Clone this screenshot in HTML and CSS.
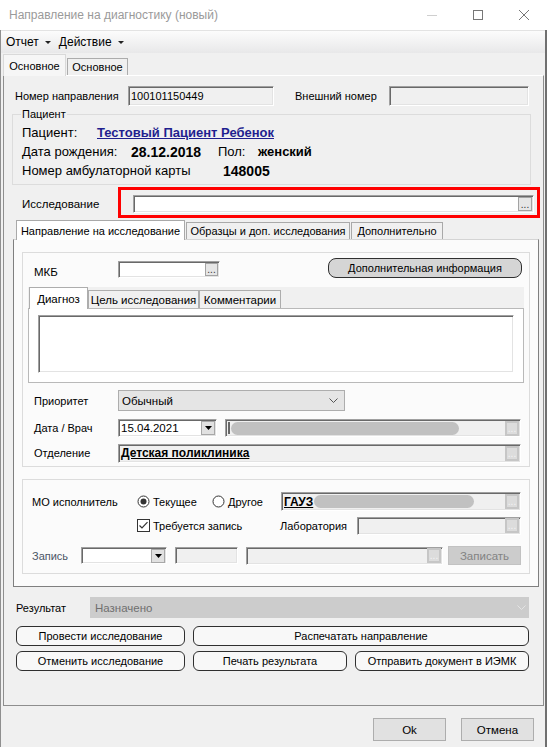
FILE: index.html
```html
<!DOCTYPE html>
<html lang="ru">
<head>
<meta charset="utf-8">
<title>Направление на диагностику (новый)</title>
<link rel="stylesheet" href="styles.css">
</head>
<body>
<div class="titlebar">
  <span class="title">Направление на диагностику (новый)</span>
  <div class="winctl">
    <span class="wbtn"><svg width="10" height="10" viewBox="0 0 10 10"><line x1="0" y1="5.5" x2="10" y2="5.5" stroke="#cfcfcf"/></svg></span>
    <span class="wbtn"><svg width="10" height="10" viewBox="0 0 10 10"><rect x="0.5" y="0.5" width="9" height="9" fill="none" stroke="#777"/></svg></span>
    <span class="wbtn"><svg width="10" height="10" viewBox="0 0 10 10"><path d="M0 0L10 10M10 0L0 10" stroke="#777" stroke-width="1"/></svg></span>
  </div>
</div>
<div class="frame">
  <div class="menubar">
    <span class="menu">Отчет<i class="menu-arrow"></i></span>
    <span class="menu">Действие<i class="menu-arrow"></i></span>
  </div>
  <div class="mtabs">
    <span class="mtab mtab-active">Основное</span>
    <span class="mtab mtab-second">Основное</span>
  </div>
  <div class="mpage">
    <div class="num-row">
      <span class="num-label">Номер направления</span>
      <span class="tb ro num-field">100101150449</span>
      <span class="ext-label">Внешний номер</span>
      <span class="tb ro ext-field"></span>
    </div>

    <fieldset class="patient">
      <legend>Пациент</legend>
      <div class="prow"><span class="pl pl-name">Пациент:</span><span class="pname">Тестовый Пациент Ребенок</span></div>
      <div class="prow"><span class="pl pl-dob">Дата рождения:</span><b class="pv pv-num pv-dob">28.12.2018</b><span class="pl pl-sex">Пол:</span><b class="pv">женский</b></div>
      <div class="prow"><span class="pl pl-card">Номер амбулаторной карты</span><b class="pv pv-num">148005</b></div>
    </fieldset>

    <div class="issl-row">
      <span class="issl-label">Исследование</span>
      <div class="highlight">
        <div class="tb issl-field"><span class="dots">...</span></div>
      </div>
    </div>

    <div class="itc">
      <div class="itabs">
        <span class="itab itab-active it1">Направление на исследование</span>
        <span class="itab it2">Образцы и доп. исследования</span>
        <span class="itab it3">Дополнительно</span>
      </div>
      <div class="ipage">
        <div class="box box1">
          <div class="mkb-row">
            <span class="lbl2 mkb-label">МКБ</span>
            <span class="tb mkb-field"><span class="dots dots-sm">...</span></span>
            <button class="rbtn rbtn-gray info-btn">Дополнительная информация</button>
          </div>
          <div class="dtc">
            <div class="dtabs">
              <span class="dtab dtab-active dt1">Диагноз</span>
              <span class="dtab dt2">Цель исследования</span>
              <span class="dtab dt3">Комментарии</span>
            </div>
            <div class="dpage"><div class="tb diag-field"></div></div>
          </div>
          <div class="frow prio-row">
            <span class="lbl2">Приоритет</span>
            <span class="combo prio-combo">Обычный<svg class="chev" width="9" height="5" viewBox="0 0 9 5"><path d="M0.5 0.5L4.5 4.5L8.5 0.5" fill="none" stroke="#555"/></svg></span>
          </div>
          <div class="frow date-row">
            <span class="lbl2">Дата / Врач</span>
            <span class="tb date-field">15.04.2021<span class="ddbtn"><svg width="7" height="4" viewBox="0 0 7 4"><path d="M0 0H7L3.5 4Z" fill="#000"/></svg></span></span>
            <span class="tb ro doc-field"><i class="mark"></i><i class="blur doc-blur"></i><span class="dots dots-off">...</span></span>
          </div>
          <div class="frow dept-row">
            <span class="lbl2">Отделение</span>
            <span class="tb ro dept-field"><b class="ulink">Детская поликлиника</b><span class="dots dots-off">...</span></span>
          </div>
        </div>

        <div class="box box2">
          <div class="frow mo-row">
            <span class="mo-label">МО исполнитель</span>
            <span class="ritem ri-cur"><svg width="13" height="13" viewBox="0 0 13 13"><circle cx="6.5" cy="6.5" r="5.5" fill="#fff" stroke="#333"/><circle cx="6.5" cy="6.5" r="3" fill="#333"/></svg><span class="rtext">Текущее</span></span>
            <span class="ritem ri-other"><svg width="13" height="13" viewBox="0 0 13 13"><circle cx="6.5" cy="6.5" r="5.5" fill="#fff" stroke="#333"/></svg><span class="rtext">Другое</span></span>
            <span class="tb ro mo-field"><b class="ulink">ГАУЗ</b><i class="blur mo-blur"></i><span class="dots dots-off">...</span></span>
          </div>
          <div class="frow rec-row">
            <span class="ritem chk-item"><svg width="13" height="13" viewBox="0 0 13 13"><rect x="0.5" y="0.5" width="12" height="12" fill="#fff" stroke="#333"/><path d="M2.5 6.5L5 9L10.5 3.2" fill="none" stroke="#333" stroke-width="1.2"/></svg><span class="rtext">Требуется запись</span></span>
            <span class="lab-label">Лаборатория</span>
            <span class="tb ro lab-field"><span class="dots dots-off">...</span></span>
          </div>
          <div class="frow zap-row">
            <span class="zap-label">Запись</span>
            <span class="tb zap-combo"><span class="ddbtn"><svg width="7" height="4" viewBox="0 0 7 4"><path d="M0 0H7L3.5 4Z" fill="#000"/></svg></span></span>
            <span class="tb ro zap-f2"></span>
            <span class="tb ro zap-f3"><span class="dots dots-off">...</span></span>
            <span class="zap-btn">Записать</span>
          </div>
        </div>
      </div>
    </div>

    <div class="res-row">
      <span class="res-label">Результат</span>
      <span class="res-combo">Назначено<svg class="chev" width="9" height="5" viewBox="0 0 9 5"><path d="M0.5 0.5L4.5 4.5L8.5 0.5" fill="none" stroke="#e4e4e4"/></svg></span>
    </div>
    <div class="btn-row">
      <button class="rbtn b-w169">Провести исследование</button>
      <button class="rbtn b-gap b-w336">Распечатать направление</button>
    </div>
    <div class="btn-row btn-row2">
      <button class="rbtn b-w169">Отменить исследование</button>
      <button class="rbtn b-gap b-w154">Печать результата</button>
      <button class="rbtn b-gap b-w174">Отправить документ в ИЭМК</button>
    </div>
  </div>
  <div class="bottombar">
    <button class="wbutton ok-btn">Ok</button>
    <button class="wbutton">Отмена</button>
  </div>
</div>
</body>
</html>
```
FILE: styles.css
```css
* { box-sizing: border-box; }
html, body { margin: 0; padding: 0; }
body {
  width: 547px; height: 747px; overflow: hidden;
  background: #f0f0f0;
  font-family: "Liberation Sans", Arial, sans-serif;
  font-size: 11px; color: #000;
}
button { font: inherit; color: inherit; margin: 0; padding: 0; }

/* title bar */
.titlebar { height: 30px; background: #fff; display: flex; align-items: center; justify-content: space-between; }
.title { padding-left: 9px; font-size: 12px; color: #9a9a9a; }
.winctl { display: flex; }
.wbtn { width: 46px; height: 30px; display: flex; align-items: center; justify-content: center; }

.frame { height: 717px; border-left: 1px solid #8f8f8f; border-right: 2px solid #707070; }

/* menu */
.menubar {
  height: 23px; border-top: 1px solid #e3e3e3;
  background: linear-gradient(#fcfcfc, #e8e8e9);
  display: flex; align-items: center; padding-left: 5px; font-size: 12px;
}
.menu { display: flex; align-items: center; margin-right: 8px; }
.menu-arrow {
  margin-left: 6px; width: 0; height: 0;
  border-left: 3px solid transparent; border-right: 3px solid transparent; border-top: 3px solid #222;
}

/* main tabs */
.mtabs { height: 22px; display: flex; align-items: flex-end; padding-left: 2px; }
.mtab {
  height: 17px; border: 1px solid #acacac; border-bottom: 0; background: #f0f0f0;
  display: flex; align-items: center; justify-content: center;
}
.mtab-active { width: 63px; height: 22px; margin-bottom: -1px; background: #f6f6f6; border-color: #d9d9d9; position: relative; z-index: 1; }
.mtab-second { width: 61px; margin-left: 1px; }

.mpage { margin-left: 2px; width: 541px; height: 631px; border: 1px solid #8e8e8e; border-top-color: #fff; }

/* text boxes */
.tb {
  display: flex; align-items: center; height: 20px; padding: 0 1px 0 2px;
  background: #fff; border: 1px solid; border-color: #a0a0a0 #fff #fff #a0a0a0;
  box-shadow: inset 1px 1px 0 #696969, inset -1px -1px 0 #e3e3e3;
  white-space: nowrap; overflow: hidden;
}
.tb.ro { background: #f0f0f0; }

.dots {
  margin-left: auto; width: 14px; height: 14px; flex: none;
  border: 1px solid #a3a3a3; background: #e6e6e6;
  display: flex; align-items: flex-end; justify-content: center;
  font-size: 10px; line-height: 8px; color: #333; padding-bottom: 1px;
}
.dots-sm { width: 13px; height: 13px; }
.dots-off { border: 2px solid #c6c6c6; background: #dcdcdc; color: #f4f4f4; width: 14px; height: 15px; }

/* row 1 */
.num-row { display: flex; align-items: center; height: 20px; margin: 10px 0 0 11px; }
.num-label { width: 113px; }
.num-field { width: 146px; }
.ext-label { width: 94px; margin-left: 21px; }
.ext-field { width: 140px; }

/* patient group */
.patient { margin: 1px 0 0 8px; width: 519px; padding: 2px 0 4px 9px; border: 1px solid #dcdcdc; min-width: 0; }
.patient legend { padding: 0 1px; margin-left: -1px; line-height: 14px; }
.prow { display: flex; align-items: center; height: 19px; font-size: 13px; white-space: nowrap; }
.pl-name { width: 75px; }
.pname { font-weight: bold; color: #1f1f8f; text-decoration: underline; }
.pl-dob { width: 109px; }
.pv-num { font-size: 14px; }
.pv-dob { width: 87px; }
.pl-sex { width: 40px; }
.pl-card { width: 201px; }

/* Исследование */
.issl-row { display: flex; align-items: center; margin: 2px 0 0 18px; }
.issl-label { width: 96px; padding-top: 3px; font-size: 11.5px; }
.highlight { width: 422px; height: 31px; border: 3px solid #f00; padding: 5px 4px 2px 12px; }
.issl-field { width: 401px; height: 18px; }

/* inner tab control */
.itc { margin: 2px 0 0 9px; width: 526px; }
.itabs { height: 19px; display: flex; align-items: flex-end; padding-left: 3px; }
.itab {
  height: 17px; border: 1px solid #a9a9a9; border-bottom: 0; background: #f0f0f0;
  display: flex; align-items: center; justify-content: center; white-space: nowrap;
}
.itab-active { height: 20px; margin-bottom: -1px; background: #fff; position: relative; z-index: 1; }
.it1 { width: 169px; }
.it2 { width: 164px; margin-left: 1px; }
.it3 { width: 92px; margin-left: 1px; }
.ipage {
  height: 348px; border: 1px solid #7f7f7f; border-top-color: #d4d4d4;
  background: #fbfbfb; padding: 12px 0 0 8px;
}

.box { width: 508px; border: 1px solid #dcdcdc; }
.box1 { padding-bottom: 4px; }
.box2 { margin-top: 12px; padding-bottom: 8px; }

.mkb-row { display: flex; align-items: flex-start; margin-top: 5px; }
.lbl2 { margin-left: 11px; width: 84px; }
.mkb-label { margin-top: 7px; line-height: 14px; font-size: 11.5px; }
.mkb-field { width: 102px; height: 17px; margin-top: 3px; }
.rbtn {
  height: 20px; border: 1px solid #2f2f2f; border-radius: 6px; background: #f8f8f8;
  display: flex; align-items: center; justify-content: center; white-space: nowrap;
}
.rbtn-gray { background: #d5d5d5; border-radius: 8px; }
.info-btn { margin-left: 108px; width: 194px; }

.dtc { margin: 8px 0 0 5px; width: 496px; }
.dtabs { height: 21px; display: flex; align-items: flex-end; padding-left: 1px; background: #f0f0f0; }
.dtab {
  height: 18px; border: 1px solid #adadad; border-bottom: 0; background: #f0f0f0;
  display: flex; align-items: center; justify-content: center; white-space: nowrap; font-size: 11.5px;
}
.dtab-active { height: 22px; margin-bottom: -1px; background: #fff; position: relative; z-index: 1; }
.dt1 { width: 59px; }
.dt2 { width: 111px; }
.dt3 { width: 82px; }
.dpage { height: 75px; border: 1px solid #b9b9b9; background: #fff; padding: 6px 0 0 9px; }
.diag-field { width: 476px; height: 58px; }

.frow { display: flex; align-items: center; }
.prio-row { margin-top: 7px; height: 21px; }
.combo {
  display: flex; align-items: center; height: 21px; padding: 0 6px 0 3px;
  background: #e5e5e5; border: 1px solid #adadad; font-size: 11.5px;
}
.prio-combo { width: 227px; }
.chev { margin-left: auto; }
.date-row { margin-top: 8px; height: 18px; }
.date-field { width: 99px; height: 18px; font-size: 11.5px; padding-right: 1px; }
.ddbtn {
  margin-left: auto; width: 14px; height: 14px; flex: none;
  background: #e1e1e1; border: 1px solid #a8a8a8;
  display: flex; align-items: center; justify-content: center;
}
.doc-field { margin-left: 8px; width: 296px; height: 18px; }
.mark { width: 2px; height: 12px; background: #666; flex: none; }
.blur { height: 13px; border-radius: 7px; background: #c1c1c1; flex: none; }
.doc-blur { width: 228px; margin-left: 1px; }
.dept-row { margin-top: 7px; height: 18px; }
.dept-field { width: 403px; height: 19px; }
.ulink { text-decoration: underline; font-size: 12px; }

.mo-row { margin-top: 12px; height: 19px; }
.mo-label { margin-left: 9px; width: 105px; }
.ritem { display: flex; align-items: center; }
.rtext { margin-left: 3px; }
.ri-cur { width: 75px; }
.ri-other { width: 69px; }
.mo-field { width: 240px; height: 19px; }
.mo-blur { width: 160px; margin-left: 1px; }
.rec-row { margin: 6px 0 0 114px; height: 17px; }
.chk-item { width: 143px; }
.lab-label { width: 77px; }
.lab-field { width: 164px; height: 18px; }
.zap-row { margin-top: 12px; height: 19px; }
.zap-label { margin-left: 9px; width: 49px; color: #4b5566; }
.zap-combo { width: 86px; height: 17px; }
.zap-f2 { margin-left: 8px; width: 63px; height: 17px; }
.zap-f3 { margin-left: 8px; width: 197px; height: 18px; }
.zap-btn {
  margin-left: 5px; width: 73px; height: 19px; background: #cccccc; border: 1px solid #c2c2c2;
  color: #838383; display: flex; align-items: center; justify-content: center; font-size: 11.5px;
}

/* result + actions */
.res-row { display: flex; align-items: center; height: 21px; margin: 10px 0 0 12px; }
.res-label { width: 74px; }
.res-combo {
  display: flex; align-items: center; width: 439px; height: 21px; padding: 0 3px 0 5px;
  background: #cccccc; color: #6f6f6f; font-size: 11.5px;
}
.btn-row { display: flex; margin: 8px 0 0 12px; }
.btn-row2 { margin-top: 5px; }
.b-gap { margin-left: 8px; }
.b-w169 { width: 169px; }
.b-w336 { width: 336px; }
.b-w154 { width: 154px; }
.b-w174 { width: 174px; }

/* bottom */
.bottombar { height: 41px; display: flex; justify-content: flex-end; padding: 12px 11px 0 0; }
.wbutton { width: 73px; height: 23px; background: #e1e1e1; border: 1px solid #adadad; font-size: 11.5px; }
.ok-btn { margin-right: 15px; }
```
